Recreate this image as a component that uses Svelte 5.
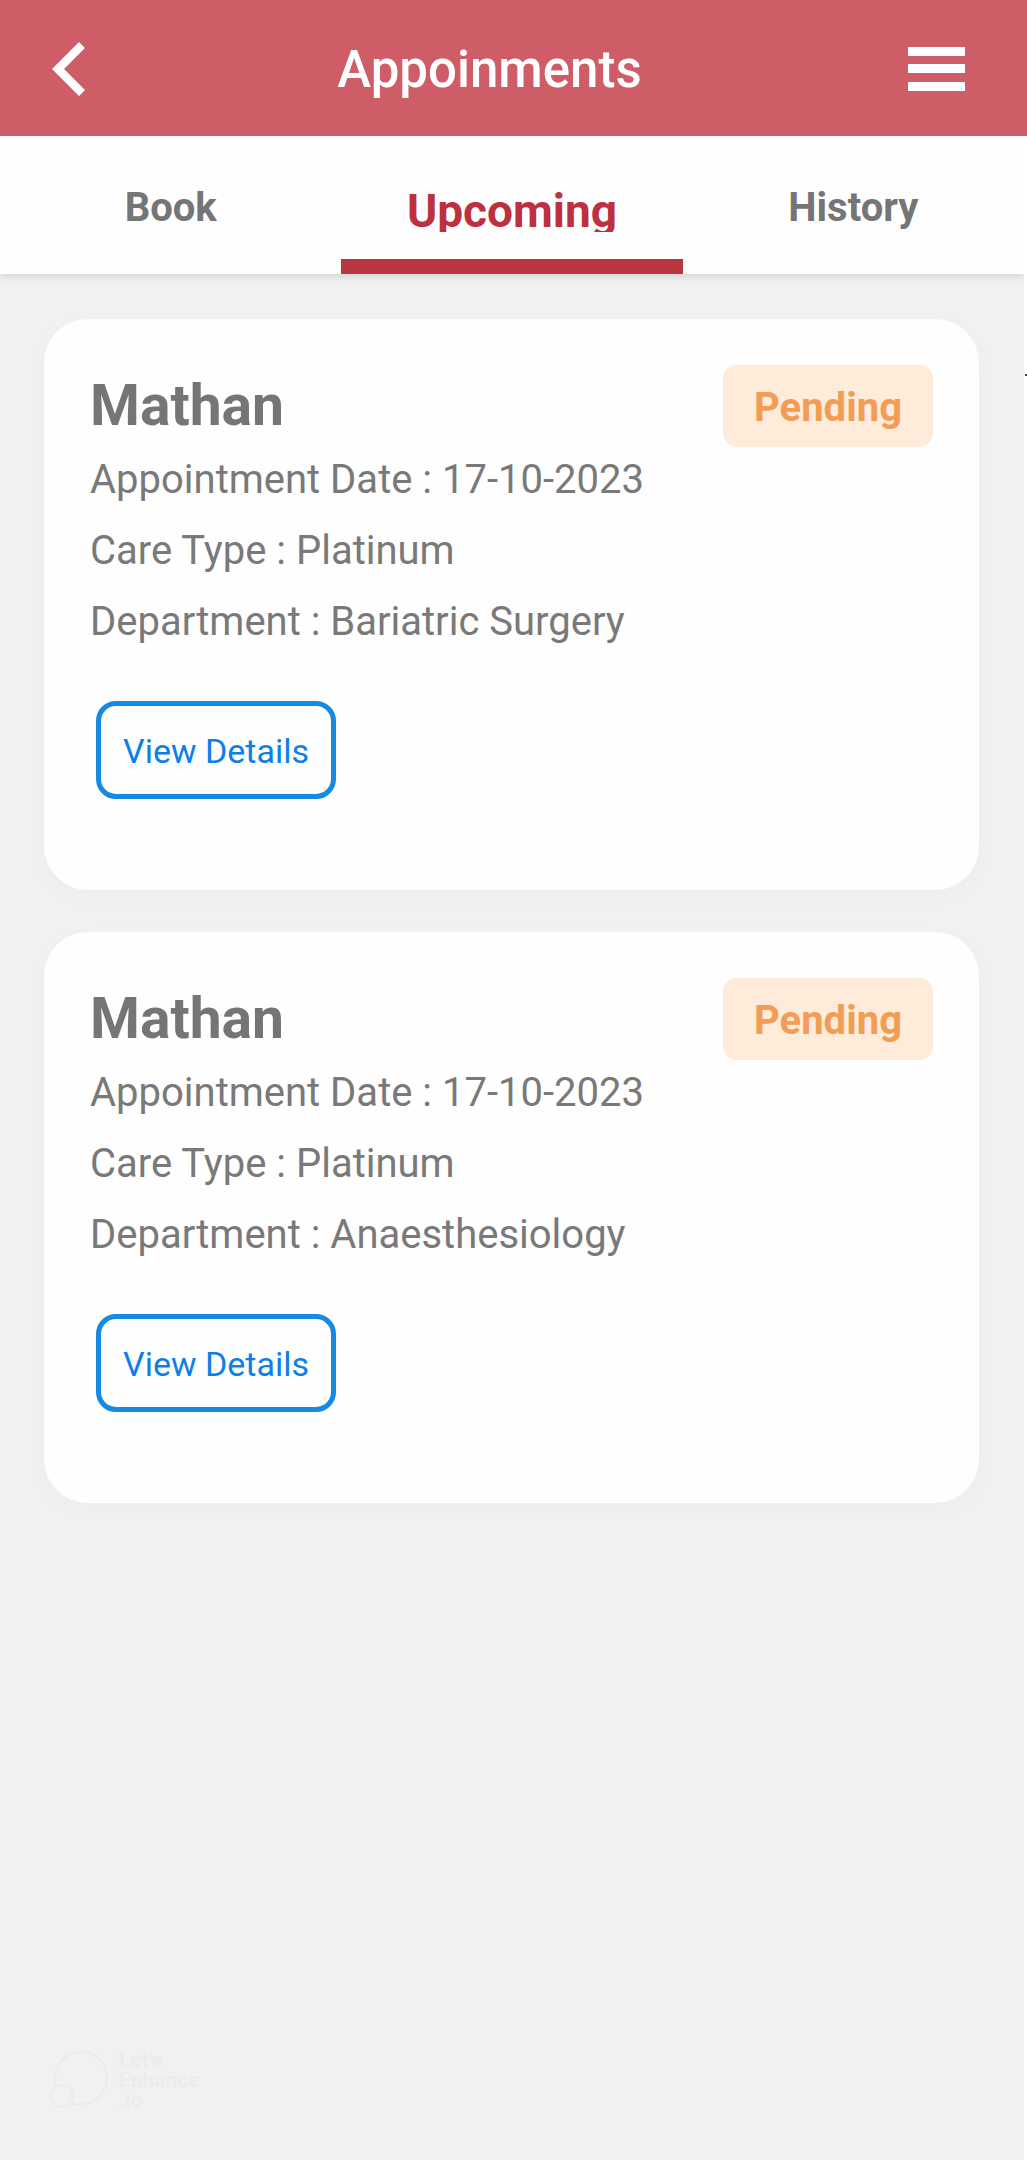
<script>
  const tabs = ['Book', 'Upcoming', 'History'];
  let active = $state('Upcoming');

  const appointments = [
    { name: 'Mathan', date: '17-10-2023', care: 'Platinum', department: 'Bariatric Surgery', status: 'Pending' },
    { name: 'Mathan', date: '17-10-2023', care: 'Platinum', department: 'Anaesthesiology', status: 'Pending' }
  ];
</script>

<div class="app">
  <header>
    <button class="icon" aria-label="Back">
      <svg width="34" height="54" viewBox="0 0 34 54"><path d="M27 0L33 6L12 27L33 48L27 54L0 27Z" fill="#fff" /></svg>
    </button>
    <h1>Appoinments</h1>
    <button class="icon" aria-label="Menu">
      <svg width="57" height="44" viewBox="0 0 57 44"><path d="M0 0H57V9H0ZM0 17H57V26H0ZM0 35H57V44H0Z" fill="#fff" /></svg>
    </button>
  </header>

  <div class="page">
    <nav>
      {#each tabs as tab}
        <button class="tab" class:active={tab === active} onclick={() => (active = tab)}><span>{tab}</span></button>
      {/each}
    </nav>

    <main>
      {#each appointments as a}
        <article>
          <div class="top">
            <h2>{a.name}</h2>
            <span class="badge">{a.status}</span>
          </div>
          <p>Appointment Date : {a.date}</p>
          <p>Care Type : {a.care}</p>
          <p>Department : {a.department}</p>
          <button class="details">View Details</button>
        </article>
      {/each}
    </main>

    <footer>
      <svg width="58" height="58" viewBox="0 0 58 58" fill="none" stroke="#ebebec" stroke-width="2">
        <path d="M5 34V27A26 26 0 1 1 31 53H22" />
        <circle cx="12" cy="45" r="11" />
      </svg>
      <div class="mark">Let's<br />Enhance<br />.io</div>
    </footer>
    <i class="peek"></i>
  </div>
</div>

<style>
  :global(body) {
    margin: 0;
    background: #f1f1f1;
  }
  .app {
    display: flex;
    flex-direction: column;
    min-height: 100vh;
    font-family: Roboto, 'Liberation Sans', sans-serif;
    color: #757575;
  }
  button {
    font: inherit;
    color: inherit;
    margin: 0;
    padding: 0;
    border: 0;
    background: none;
    cursor: pointer;
  }
  svg {
    display: block;
  }
  header {
    display: grid;
    grid-template-columns: 1fr auto 1fr;
    align-items: center;
    height: 136px;
    padding: 2px 62px 0 52px;
    box-sizing: border-box;
    background: #ce5d68;
    color: #fff;
  }
  .icon:last-child {
    justify-self: end;
  }
  .icon:first-child {
    justify-self: start;
  }
  h1 {
    margin: 0;
    padding: 2px 38px 0 0;
    font-size: 51px;
    line-height: 60px;
    font-weight: 500;
  }
  .page {
    position: relative;
    display: flex;
    flex-direction: column;
    flex: 1;
    border-right: 3px solid #fff;
  }
  nav {
    display: grid;
    grid-template-columns: repeat(3, 1fr);
    height: 138px;
    background: #fefefe;
    box-shadow: 0 2px 8px rgba(0, 0, 0, 0.14);
    clip-path: inset(0 0 -20px 0);
  }
  .tab {
    display: flex;
    align-items: flex-start;
    justify-content: center;
    padding-top: 48px;
    border-bottom: 15px solid transparent;
    font-size: 40px;
    line-height: 48px;
    font-weight: 700;
  }
  .tab.active {
    border-bottom-color: #ba3640;
    color: #bd303f;
    font-size: 46px;
    line-height: 54px;
  }
  .tab.active span {
    height: 48px;
    overflow: hidden;
  }
  main {
    display: flex;
    flex-direction: column;
    gap: 42px;
    padding: 45px 45px 45px 44px;
  }
  article {
    padding: 46px 46px 91px;
    border-radius: 44px;
    background: #fefefe;
    box-shadow: 0 6px 26px rgba(0, 0, 0, 0.02);
  }
  .top {
    display: flex;
    align-items: center;
    justify-content: space-between;
    height: 82px;
  }
  h2 {
    margin: 0;
    font-size: 57px;
    line-height: 82px;
    font-weight: 700;
  }
  .badge {
    padding: 4px 31px 0;
    border-radius: 14px;
    background: #feebd9;
    color: #f19d55;
    font-size: 40px;
    line-height: 78px;
    font-weight: 700;
  }
  p {
    margin: 0;
    color: #797979;
    font-size: 40px;
    line-height: 71px;
  }
  .top + p {
    margin-top: -3px;
  }
  .details {
    display: block;
    margin: 44px 0 0 6px;
    padding: 2px 22px 0;
    border: 5px solid #168ae0;
    border-radius: 20px;
    color: #0c7fe9;
    font-size: 34px;
    line-height: 86px;
  }
  footer {
    display: flex;
    align-items: center;
    gap: 11px;
    margin-top: auto;
    padding: 0 50px 50px;
    color: #ebebed;
  }
  .mark {
    font-size: 21px;
    line-height: 20px;
    font-weight: 700;
  }
  .peek {
    position: absolute;
    top: 238px;
    right: -3px;
    width: 2px;
    height: 2px;
    background: #444;
  }
</style>
